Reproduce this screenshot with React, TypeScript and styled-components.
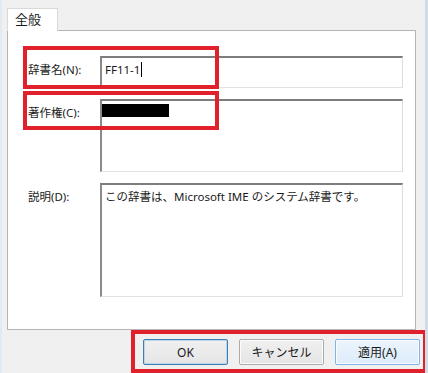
import styled, { createGlobalStyle } from 'styled-components';

const GlobalStyle = createGlobalStyle`
  html, body {
    margin: 0;
    padding: 0;
    background: #f0f0f0;
  }
  * {
    box-sizing: border-box;
  }
`;

const Dialog = styled.div`
  position: relative;
  width: 428px;
  height: 373px;
  overflow: hidden;
  background: #f0f0f0;
  border-left: 2px solid #e2eaf2;
  border-right: 3px solid #cfdbe7;
  padding: 8px 0 0 5px;
  font-family: 'Noto Sans', 'Noto Sans CJK JP', sans-serif;
  font-size: 11.5px;
  color: #1a1a1a;
`;

const TabStrip = styled.div`
  display: flex;
  height: 22px;
`;

const Tab = styled.div`
  width: 51px;
  height: 23px;
  padding: 2px 0 0 7px;
  background: #ffffff;
  border: 1px solid #d9d9d9;
  border-bottom: none;
  position: relative;
  z-index: 1;
  line-height: 16px;
  font-size: 13px;
`;

const Panel = styled.div`
  width: 409px;
  height: 300px;
  background: #ffffff;
  border: 1px solid #b4b4b4;
  padding: 25px 12px 0 20px;
  display: flex;
  flex-direction: column;
  gap: 11px;
`;

const Row = styled.div`
  display: grid;
  grid-template-columns: 72px 303px;
`;

const Label = styled.div`
  padding-top: 6px;
  line-height: 16px;
`;

const Field = styled.div<{ $height: number }>`
  position: relative;
  height: ${({ $height }) => $height}px;
  border-top: 2px solid #7d7d7d;
  border-left: 2px solid #8a8a8a;
  border-right: 1px solid #dcdcdc;
  border-bottom: 1px solid #e2e2e2;
  padding: 4px 3px;
  line-height: 16px;
  background: #ffffff;
`;

const Caret = styled.span`
  display: inline-block;
  width: 1px;
  height: 15px;
  background: #000;
  vertical-align: -3px;
  margin-left: 1px;
`;

const Redaction = styled.div`
  width: 67px;
  height: 13px;
  margin: -1px 0 0 -3px;
  background: #000;
`;

const ButtonBar = styled.div`
  display: flex;
  justify-content: flex-end;
  gap: 11px;
  padding: 9px 5px 0 0;
`;

const Button = styled.div<{ $variant?: 'default' | 'hover' }>`
  width: 85px;
  height: 26px;
  display: flex;
  align-items: center;
  justify-content: center;
  border-radius: 2px;
  border: 1px solid
    ${({ $variant }) =>
      $variant === 'default' ? '#3c7fb1' : $variant === 'hover' ? '#7eb4ea' : '#acacac'};
  background: ${({ $variant }) =>
    $variant === 'hover'
      ? 'linear-gradient(#ecf4fc, #dcecfc)'
      : 'linear-gradient(#f0f0f0, #e5e5e5)'};
  box-shadow: ${({ $variant }) =>
    $variant === 'default' ? 'inset 0 0 0 1px #b8d6ee' : 'inset 0 0 0 1px #fcfcfc'};
  font-size: 12px;
`;

const Marker = styled.div<{ $x: number; $y: number; $w: number; $h: number }>`
  position: absolute;
  left: ${({ $x }) => $x}px;
  top: ${({ $y }) => $y}px;
  width: ${({ $w }) => $w}px;
  height: ${({ $h }) => $h}px;
  border: 4px solid #e0202a;
  pointer-events: none;
`;

export default function App() {
  return (
    <>
      <GlobalStyle />
      <Dialog>
        <TabStrip>
          <Tab>全般</Tab>
        </TabStrip>
        <Panel>
          <Row>
            <Label>辞書名(N):</Label>
            <Field $height={32}>
              FF11-1
              <Caret />
            </Field>
          </Row>
          <Row>
            <Label>著作権(C):</Label>
            <Field $height={73}>
              <Redaction />
            </Field>
          </Row>
          <Row>
            <Label>説明(D):</Label>
            <Field $height={114}>この辞書は、Microsoft IME のシステム辞書です。</Field>
          </Row>
        </Panel>
        <ButtonBar>
          <Button $variant="default">OK</Button>
          <Button>キャンセル</Button>
          <Button $variant="hover">適用(A)</Button>
        </ButtonBar>
        <Marker $x={21} $y={46} $w={196} $h={43} />
        <Marker $x={21} $y={91} $w={196} $h={39} />
        <Marker $x={129} $y={330} $w={296} $h={43} />
      </Dialog>
    </>
  );
}
